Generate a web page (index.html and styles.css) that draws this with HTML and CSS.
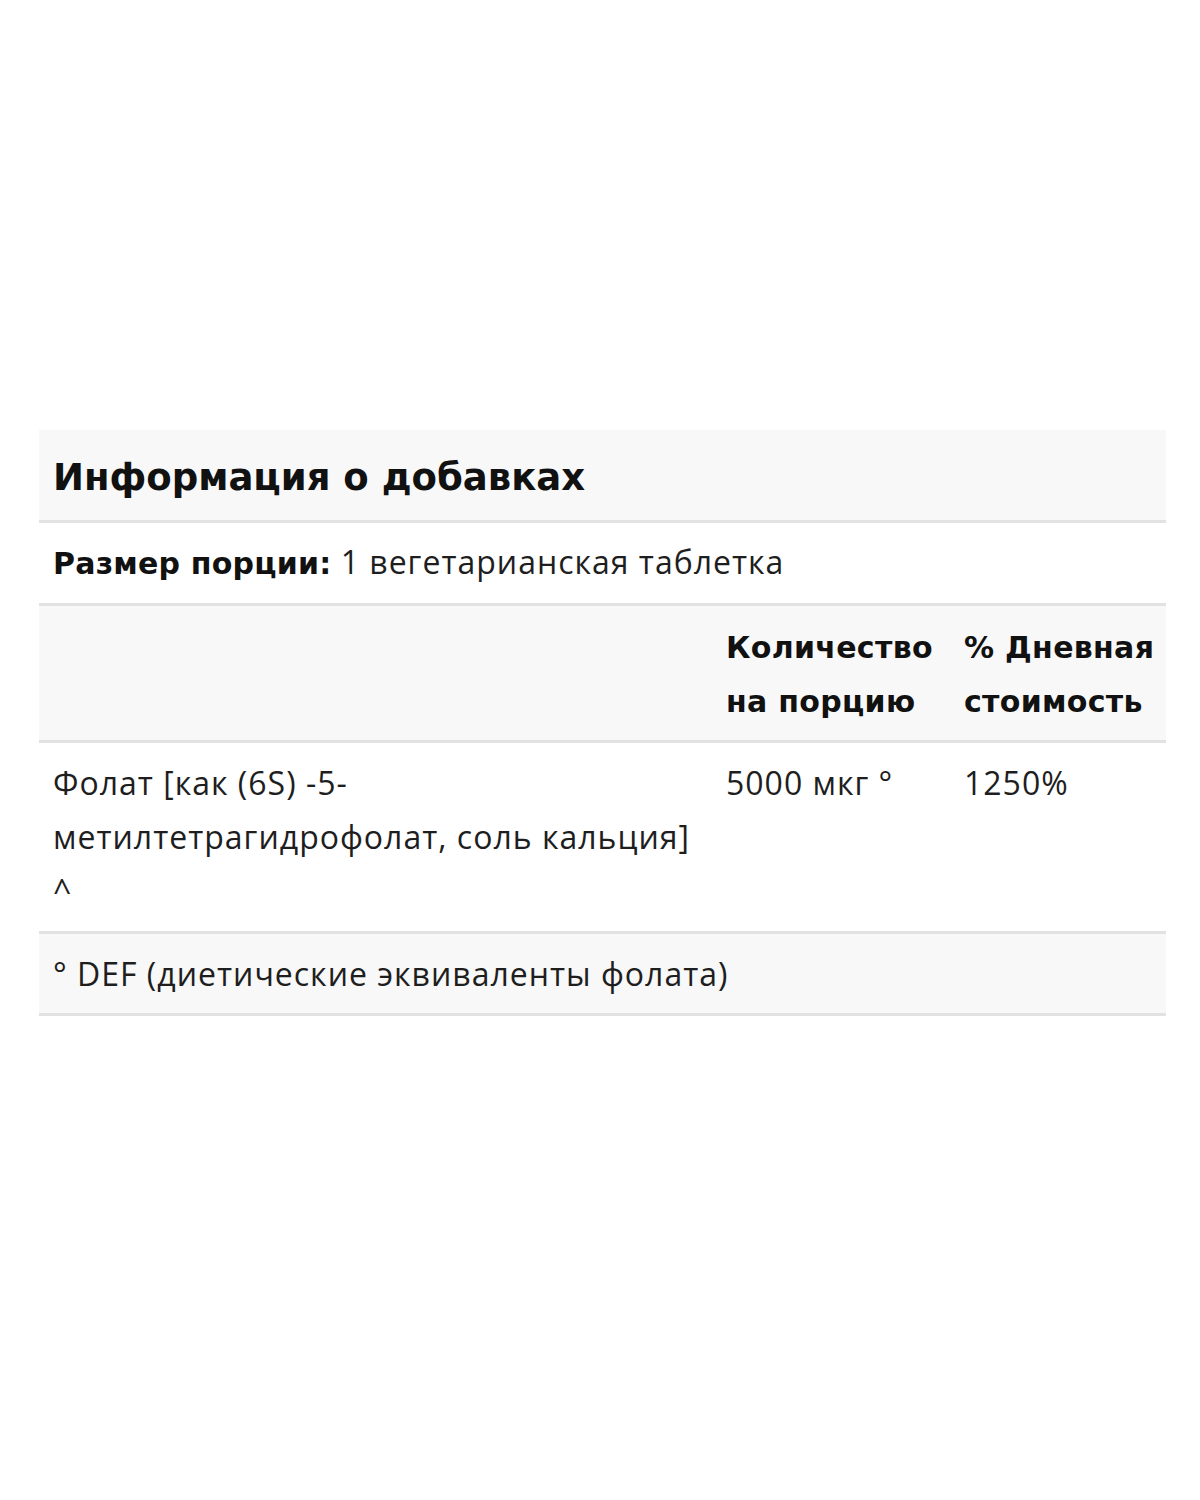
FILE: index.html
```html
<!DOCTYPE html>
<html lang="ru">
<head>
<meta charset="utf-8">
<link rel="stylesheet" href="styles.css">
</head>
<body>
<div class="page">
  <table class="facts">
    <colgroup>
      <col class="c1"><col class="c2"><col class="c3">
    </colgroup>
    <thead>
      <tr class="title-row"><th colspan="3" class="title">Информация о добавках</th></tr>
      <tr class="serving-row"><td colspan="3"><b>Размер порции:</b> 1 вегетарианская таблетка</td></tr>
      <tr class="head-row">
        <th></th>
        <th>Количество на порцию</th>
        <th>% Дневная стоимость</th>
      </tr>
    </thead>
    <tbody>
      <tr class="data-row">
        <td class="name">Фолат [как (6S) -5-метилтетрагидрофолат, соль кальция] ^</td>
        <td>5000 мкг °</td>
        <td>1250%</td>
      </tr>
      <tr class="foot-row"><td colspan="3">° DEF (диетические эквиваленты фолата)</td></tr>
    </tbody>
  </table>
</div>
</body>
</html>
```
FILE: styles.css
```css
html, body {
  margin: 0;
  padding: 0;
  background: #fff;
}
body {
  font-family: "Open Sans", "Liberation Sans", sans-serif;
  color: #1e1e1e;
}
.page {
  padding: 430px 34px 0 39px;
}
.facts {
  width: 1127px;
  border-collapse: collapse;
  table-layout: fixed;
}
.c1 { width: 673px; }
.c2 { width: 238px; }
.c3 { width: 216px; }
.facts th, .facts td {
  text-align: left;
  vertical-align: top;
  padding: 0 0 0 14px;
  font-size: 32px;
  line-height: 54px;
  letter-spacing: 1px;
  font-weight: 400;
}
.facts b, .facts th {
  font-family: "DejaVu Sans", "Open Sans", sans-serif;
  font-weight: 700;
  color: #111;
}
.facts tr {
  border-bottom: 3px solid #e2e2e2;
}
.title-row { background: #f8f8f8; }
.facts .title {
  font-size: 37px;
  letter-spacing: 0;
  height: 85px;
  padding-top: 5px;
  vertical-align: middle;
}
.serving-row td {
  height: 80px;
  vertical-align: middle;
}
.serving-row b {
  font-size: 30px;
  letter-spacing: 0.2px;
}
.head-row { background: #f8f8f8; }
.facts .head-row th {
  font-size: 30px;
  letter-spacing: 0.3px;
  padding-top: 15px;
  padding-bottom: 11px;
}
.data-row td {
  padding-top: 13px;
  padding-bottom: 13px;
  height: 158px;
}
.data-row .name { padding-right: 8px; }
.foot-row { background: #f8f8f8; }
.foot-row td {
  height: 79px;
  vertical-align: middle;
}
```
